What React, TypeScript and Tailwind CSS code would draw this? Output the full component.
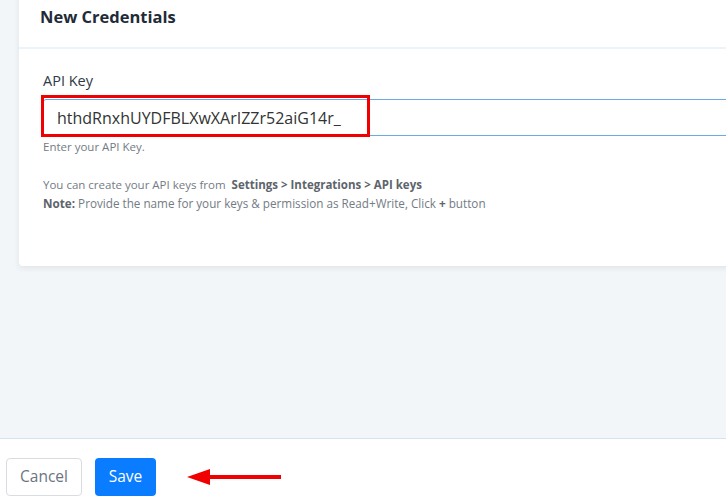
import React from "react";

export default function App() {
  return (
    <div className="w-[726px] h-[502px] overflow-hidden bg-[#f3f6f9] flex flex-col font-['Open_Sans',sans-serif]">
      <div className="flex-1 pl-[19px] -mt-[10px]">
        <div className="bg-white rounded-bl-[4px] shadow-[0_2px_6px_rgba(0,0,0,0.08)] h-[276px] w-[720px]">
          <div className="h-[59px] border-b-2 border-[#edf3fb] pl-[21px] pt-[14px]">
            <h2 className="text-[16.5px] font-bold text-[#1f2b37] leading-[26px]">New Credentials</h2>
          </div>
          <div className="pl-[24px] pt-[21px]">
            <label className="block text-[14.5px] text-[#2e3a45] leading-[22px]">API Key</label>
            <div className="relative mt-[7px]">
              <input
                readOnly
                value="hthdRnxhUYDFBLXwXArIZZr52aiG14r_"
                className="w-[700px] h-[37px] border border-[#6aaae6] rounded-[3px] pl-[13px] text-[16px] text-[#333] outline-none font-['Open_Sans',sans-serif]"
              />
              <div className="absolute -left-[2px] -top-[4px] w-[329px] h-[42px] border-[3px] border-[#f00000] pointer-events-none" />
            </div>
            <p className="text-[11.5px] text-[#737b84] mt-[3px] leading-[16px]">Enter your API Key.</p>
            <p className="text-[11.5px] text-[#737b84] mt-[21px] leading-[18px]">
              You can create your API keys from <span className="font-bold text-[#5d646b]">&nbsp;Settings &gt; Integrations &gt; API keys</span>
            </p>
            <p className="text-[11.7px] text-[#737b84] leading-[18px]">
              <span className="font-bold text-[#5d646b]">Note:</span> Provide the name for your keys &amp; permission as Read+Write, Click <span className="font-bold text-[#5d646b]">+</span> button
            </p>
          </div>
        </div>
      </div>
      <div className="h-[64px] bg-white border-t border-[#d6e3f3] flex items-start pt-[19px] pl-[6px] gap-[13px]">
        <button className="h-[38px] w-[76px] border border-[#d9dde1] rounded-[4px] text-[15.5px] text-[#6b7580] bg-white font-['Open_Sans',sans-serif]">Cancel</button>
        <button className="h-[38px] w-[61px] rounded-[4px] bg-[#0a7cff] text-white text-[15.5px] font-['Open_Sans',sans-serif]">Save</button>
        <svg width="100" height="20" viewBox="0 0 100 20" className="ml-[18px] mt-[9px]">
          <line x1="20" y1="10" x2="94" y2="10" stroke="#f00000" strokeWidth="4" />
          <polygon points="0,10 23,2 23,18" fill="#f00000" />
        </svg>
      </div>
    </div>
  );
}
